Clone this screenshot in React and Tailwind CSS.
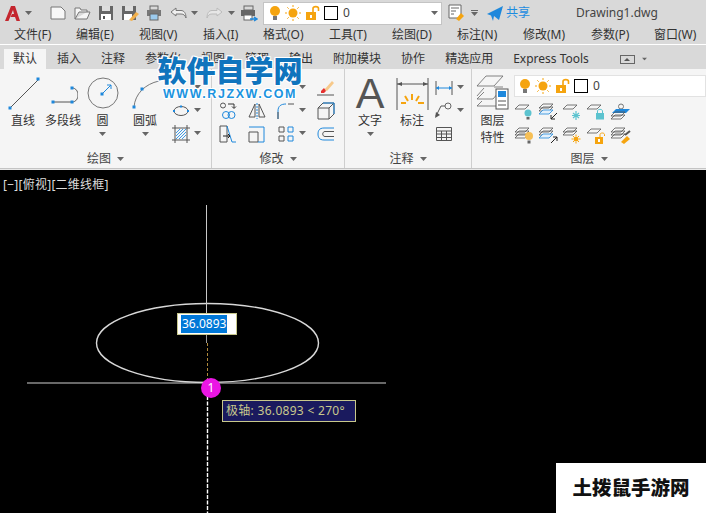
import React from 'react';

const GRAY = '#555555';
const BLUE = '#1e88dc';
const ORANGE = '#f5a40f';
const TEAL = '#5cc3cf';

const Caret = ({ className = '' }) => (
  <svg width="7" height="4" viewBox="0 0 7 4" className={`shrink-0 ${className}`}>
    <path d="M0 0H7L3.5 4Z" fill="#666666" />
  </svg>
);

const Ic = ({ w = 18, h = 18, children }) => (
  <svg width={w} height={h} viewBox={`0 0 ${w} ${h}`} fill="none" className="shrink-0 block">
    {children}
  </svg>
);

const Dot = ({ x, y, s = 3 }) => <rect x={x - s / 2} y={y - s / 2} width={s} height={s} fill={BLUE} />;

const Bulb = ({ color = ORANGE }) => (
  <Ic w={12} h={16}>
    <circle cx="6" cy="6" r="5" fill={color} />
    <rect x="4" y="11" width="4" height="4" fill="#777777" />
  </Ic>
);

const Sun = () => (
  <Ic w={16} h={16}>
    <circle cx="8" cy="8" r="4.5" fill={ORANGE} />
    <path d="M8 0V2M8 14V16M0 8H2M14 8H16M2.3 2.3L3.7 3.7M12.3 12.3L13.7 13.7M2.3 13.7L3.7 12.3M12.3 3.7L13.7 2.3" stroke={ORANGE} />
  </Ic>
);

const OpenLock = () => (
  <Ic w={15} h={16}>
    <rect x="1" y="7" width="10" height="8" fill={ORANGE} />
    <rect x="5" y="10" width="2" height="3" fill="#ffffff" />
    <path d="M8 7V3.5C8 1 13.5 1 13.5 3.5V6" stroke={ORANGE} strokeWidth="1.6" />
  </Ic>
);

const ColorBox = () => <span className="block w-[14px] h-[14px] border border-black bg-white shrink-0" />;

const LayerStates = () => (
  <>
    <Bulb />
    <Sun />
    <OpenLock />
    <ColorBox />
    <span className="ml-[1px] text-[12px] leading-none text-[#444444]">0</span>
  </>
);

// layer sheet: flat parallelogram
const Sheet = ({ y = 0, fill = 'none', stroke = GRAY }) => (
  <path d={`M1 ${y + 5}L5 ${y + 1}H15L11 ${y + 5}Z`} stroke={stroke} fill={fill} strokeWidth="0.8" />
);

const LayerIcon = ({ children }) => <Ic w={22} h={18}>{children}</Ic>;

const layerIcons = [
  <LayerIcon key="a"><Sheet y={1} /><circle cx="14" cy="10" r="3.5" fill={TEAL} /><rect x="12.5" y="14" width="3" height="2.5" fill="#666666" /></LayerIcon>,
  <LayerIcon key="b"><Sheet y={0} /><Sheet y={3} /><Sheet y={6} fill="#e3f0fb" stroke={BLUE} /><path d="M19 10L13 16M13 12V16H17" stroke="#222222" /></LayerIcon>,
  <LayerIcon key="c"><Sheet y={1} /><path d="M14 8V17M10 12.5H18M11 10L17 15M17 10L11 15" stroke={TEAL} strokeWidth="1.2" /></LayerIcon>,
  <LayerIcon key="d"><Sheet y={1} /><rect x="10" y="10" width="8" height="6.5" fill={TEAL} /><path d="M11.5 10V8C11.5 5.8 16.5 5.8 16.5 8V10" stroke={TEAL} /></LayerIcon>,
  <LayerIcon key="e"><circle cx="11" cy="3.5" r="2.5" stroke="#777777" /><path d="M2 10L6 6H20L16 10Z" fill={BLUE} /><Sheet y={8} /><Sheet y={11} /></LayerIcon>,
  <LayerIcon key="f"><Sheet y={0} /><Sheet y={3} /><Sheet y={6} /><circle cx="15" cy="9" r="4" fill="#f6bf55" /><rect x="13.5" y="13.5" width="3" height="3" fill="#666666" /></LayerIcon>,
  <LayerIcon key="g"><Sheet y={0} /><Sheet y={3} /><Sheet y={6} fill="#e3f0fb" stroke={BLUE} /><path d="M13 16L19 10M15 10H19V14" stroke="#222222" /></LayerIcon>,
  <LayerIcon key="h"><Sheet y={0} /><Sheet y={3} /><circle cx="14" cy="12" r="2.5" fill={ORANGE} /><path d="M14 7.5V9M14 15V16.5M9.5 12H11M17 12H18.5M11 9L12 10M16 14L17 15M11 15L12 14M16 10L17 9" stroke={ORANGE} /></LayerIcon>,
  <LayerIcon key="i"><Sheet y={1} /><rect x="9" y="10" width="8" height="7" fill={ORANGE} /><rect x="12" y="12" width="2" height="3" fill="#ffffff" /><path d="M14 10V7.5C14 5.5 18.5 5.5 18.5 7.5V9" stroke={ORANGE} /></LayerIcon>,
  <LayerIcon key="j"><Sheet y={0} /><Sheet y={3} /><Sheet y={6} /><path d="M11 15L17 9L20 12L14 17Z" fill={ORANGE} /><path d="M15 8L20 4" stroke="#555555" strokeWidth="2" /></LayerIcon>,
];

const modifyIcons = {
  move: (
    <Ic w={18} h={18}>
      <circle cx="4" cy="3.5" r="2.5" stroke={GRAY} />
      <path d="M9 2H15V6M13 4.5L15 6.5L17 4.5" stroke="#333333" />
      <circle cx="7" cy="13" r="3.5" stroke={BLUE} />
      <circle cx="12.5" cy="13" r="3.5" stroke={BLUE} />
    </Ic>
  ),
  mirror: (
    <Ic w={18} h={18}>
      <path d="M7 2L1 15H7ZM11 2L17 15H11Z" stroke={GRAY} />
      <path d="M9 1V17" stroke={BLUE} strokeDasharray="2 1" />
    </Ic>
  ),
  fillet: (
    <Ic w={18} h={18}>
      <path d="M1 17V9C1 4 4 2 9 2" stroke={BLUE} />
      <path d="M11 2H17M1 10V17" stroke={GRAY} />
    </Ic>
  ),
  box: (
    <Ic w={18} h={18}>
      <path d="M1 6H12V17H1ZM1 6L6 1H17L12 6M17 1V12L12 17" stroke={GRAY} />
      <path d="M6 1H17V12" stroke={BLUE} />
    </Ic>
  ),
  stretch: (
    <Ic w={18} h={18}>
      <path d="M1 1H8V17H1Z" stroke={GRAY} />
      <path d="M8 1L13 17H17" stroke={BLUE} />
      <path d="M4 11H11M9 9L11 11L9 13" stroke="#222222" />
    </Ic>
  ),
  scale: (
    <Ic w={18} h={18}>
      <path d="M1 7H10V17H1Z" stroke={GRAY} />
      <path d="M1 2H16V17H10" stroke={BLUE} />
    </Ic>
  ),
  array: (
    <Ic w={16} h={16}>
      <path d="M1 1H6V6H1ZM1 10H6V15H1Z" stroke={GRAY} />
      <path d="M10 1H15V6H10ZM10 10H15V15H10Z" stroke={BLUE} />
    </Ic>
  ),
  offset: (
    <Ic w={18} h={14}>
      <path d="M17 1H7C2 1 1 4 1 7C1 10 2 13 7 13H17" stroke={BLUE} />
      <path d="M17 4.5H8C5 4.5 5 9.5 8 9.5H17" stroke={GRAY} />
    </Ic>
  ),
  eraser: (
    <Ic w={18} h={18}>
      <path d="M7 11L15 2L17 4L10 12Z" fill="#f7c98a" />
      <path d="M4 12L7 9L9 12L7 14H4Z" fill="#e53030" />
      <path d="M0 16H17" stroke={GRAY} />
    </Ic>
  ),
};

const SmallTool = ({ children, caret, className = 'justify-center' }) => (
  <div className={`relative flex items-center h-[23px] ${className}`}>
    {children}
    {caret && <Caret className="absolute left-1/2 ml-[13px] top-[9px]" />}
  </div>
);

const LargeTool = ({ label, width, caret, children }) => (
  <div className="flex flex-col items-center" style={{ width }}>
    <div className="h-[36px] flex items-center justify-center">{children}</div>
    <span className="mt-[2px] text-[12px] leading-[16px] text-[#333333]">{label}</span>
    {caret && <Caret className="mt-[3px]" />}
  </div>
);

const PanelTitle = ({ label }) => (
  <div className="h-[20px] pt-[1px] flex items-center justify-center gap-[6px] text-[12px] text-[#444444]">
    {label}
    <Caret />
  </div>
);

const menus = [
  ['文件(F)', 'w-[62px]'],
  ['编辑(E)', 'w-[63px]'],
  ['视图(V)', 'w-[64px]'],
  ['插入(I)', 'w-[60px]'],
  ['格式(O)', 'w-[66px]'],
  ['工具(T)', 'w-[63px]'],
  ['绘图(D)', 'w-[65px]'],
  ['标注(N)', 'w-[66px]'],
  ['修改(M)', 'w-[68px]'],
  ['参数(P)', 'w-[63px]'],
  ['窗口(W)', 'w-[52px]'],
];

const tabs = ['插入', '注释', '参数化', '视图', '管理', '输出', '附加模块', '协作', '精选应用', 'Express Tools'];

const QuickBar = () => (
  <div className="h-[26px] flex items-center">
    <div className="w-[24px] pl-[5px]">
      <svg width="16" height="17" viewBox="0 0 16 17">
        <path d="M0 16L6 1H10L15 16H11.5L10 12H5.5L7 9H9L8 5L3.5 16Z" fill="#c4262e" />
      </svg>
    </div>
    <Caret className="ml-[1px]" />
    <div className="w-[14px]" />
    <div className="w-[24px] flex justify-center">
      <Ic w={16} h={14}><path d="M1 1H11L15 5V13H1Z" fill="#f7f7f7" stroke="#777777" /></Ic>
    </div>
    <div className="w-[24px] flex justify-center">
      <Ic w={17} h={14}><path d="M1 13V2H6L7 4H13V6H5L1 13H13L16 6H13" stroke="#777777" fill="#f5f5f5" /></Ic>
    </div>
    <div className="w-[24px] flex justify-center">
      <Ic w={16} h={16}><path d="M1 1H15V15H1Z" fill="#666666" /><rect x="4" y="1" width="8" height="5" fill="#dddddd" /><rect x="3" y="9" width="10" height="6" fill="#ffffff" /><rect x="5" y="11" width="2" height="3" fill="#555555" /></Ic>
    </div>
    <div className="w-[24px] flex justify-center">
      <Ic w={18} h={16}><path d="M1 1H15V15H1Z" fill="#666666" /><rect x="4" y="1" width="8" height="5" fill="#dddddd" /><rect x="3" y="9" width="8" height="6" fill="#ffffff" /><path d="M8 15L15 7L18 9L11 16Z" fill="#f3b04a" /></Ic>
    </div>
    <div className="w-[24px] flex justify-center">
      <Ic w={16} h={16}><rect x="4" y="1" width="8" height="4" stroke="#666666" /><rect x="1" y="5" width="14" height="6" fill="#777777" /><rect x="4" y="9" width="8" height="6" fill="#9ccbee" stroke="#666666" /></Ic>
    </div>
    <div className="w-[24px] flex justify-center">
      <Ic w={17} h={12}><path d="M6 1L1 5L6 9V7H11C14 7 15 8.5 16 11C16 6 14 3.5 11 3.5H6Z" stroke="#777777" fill="#f0f0f0" /></Ic>
    </div>
    <Caret className="ml-[1px]" />
    <div className="w-[5px]" />
    <div className="w-[22px] flex justify-center">
      <Ic w={17} h={12}><path d="M11 1L16 5L11 9V7H6C3 7 2 8.5 1 11C1 6 3 3.5 6 3.5H11Z" stroke="#bbbbbb" fill="#e6e6e6" /></Ic>
    </div>
    <Caret className="ml-[3px]" />
    <div className="w-[5px]" />
    <div className="w-[18px] flex justify-center">
      <Ic w={18} h={17}><rect x="4" y="1" width="9" height="4" stroke="#666666" /><rect x="1" y="5" width="14" height="6" fill="#666666" /><rect x="4" y="10" width="8" height="5" fill="#ffffff" stroke="#666666" /><path d="M10 14H16M14 12L17 14L14 16" stroke={BLUE} strokeWidth="1.4" /></Ic>
    </div>
    <div className="ml-[5px] w-[179px] h-[23px] bg-white border border-[#c4c4c4] flex items-center gap-[4px] pl-[5px] pr-[2px]">
      <LayerStates />
      <div className="flex-1" />
      <Caret className="mr-[1px]" />
    </div>
    <div className="ml-[6px] w-[16px]">
      <Ic w={16} h={18}><path d="M1 1H13V14H1Z" stroke="#666666" fill="#ffffff" /><path d="M3 4H11M3 7H8M3 10H6" stroke="#666666" /><path d="M8 15L13 9L16 12L11 17Z" fill={ORANGE} /></Ic>
    </div>
    <div className="ml-[7px] flex flex-col items-center gap-[1px]">
      <span className="block w-[7px] h-[1px] bg-[#666666]" />
      <Caret />
    </div>
    <div className="ml-[9px]">
      <Ic w={16} h={15}><path d="M0 8L16 0L12 14L7 10L6 15L4 9.5Z" fill={BLUE} /></Ic>
    </div>
    <span className="ml-[3px] text-[12px] text-[#1c8ce0]">共享</span>
    <span className="ml-[46px] text-[12px] text-[#444444]">Drawing1.dwg</span>
  </div>
);

const MenuBar = () => (
  <div className="h-[19px] flex items-center pl-[14px] border-b border-white">
    {menus.map(([label, w]) => (
      <span key={label} className={`${w} shrink-0 text-[12px] leading-[16px] text-[#333333] whitespace-nowrap`}>{label}</span>
    ))}
  </div>
);

const TabBar = () => (
  <div className="h-[24px] flex items-end pl-[4px] text-[12px] leading-[20px] text-[#333333]">
    <span className="h-[20px] w-[42px] flex items-center justify-center bg-[#f5f5f5]">默认</span>
    <div className="h-[20px] ml-[11px] flex items-center gap-[20px]">
      {tabs.map((t) => (
        <span key={t} className="whitespace-nowrap">{t}</span>
      ))}
    </div>
    <div className="h-[20px] ml-[31px] flex items-center">
      <div className="w-[15px] h-[9px] border border-[#666666] flex items-center justify-center">
        <span className="block w-0 h-0 border-x-[3px] border-x-transparent border-b-[3px] border-b-[#555555]" />
      </div>
      <Caret className="ml-[6px] scale-75" />
    </div>
  </div>
);

const DrawPanel = () => (
  <section className="w-[212px] shrink-0 flex flex-col border-r border-[#cfcfcf]">
    <div className="flex-1 flex pt-[6px] pl-[3px]">
      <LargeTool label="直线" width="40px">
        <Ic w={34} h={36}>
          <path d="M4 33L33 4" stroke="#555555" />
          <Dot x={4} y={33} /><Dot x={32} y={4} />
        </Ic>
      </LargeTool>
      <LargeTool label="多段线" width="40px">
        <Ic w={30} h={30}>
          <path d="M5 24H24C32 24 32 10 24 10" stroke="#555555" />
          <Dot x={5} y={24} /><Dot x={24} y={24} /><Dot x={24} y={10} />
        </Ic>
      </LargeTool>
      <LargeTool label="圆" width="39px" caret>
        <Ic w={32} h={32}>
          <circle cx="16" cy="16" r="15" stroke="#777777" />
          <path d="M15 17L24 8M20 8H24V12" stroke={BLUE} />
          <Dot x={15} y={17} />
        </Ic>
      </LargeTool>
      <LargeTool label="圆弧" width="46px" caret>
        <Ic w={36} h={34}>
          <path d="M7 31C8 18 18 8 32 5" stroke="#777777" />
          <Dot x={7} y={31} /><Dot x={15} y={13} />
        </Ic>
      </LargeTool>
      <div className="w-[26px] flex flex-col pt-[1px]">
        <SmallTool caret><span /></SmallTool>
        <SmallTool caret>
          <Ic w={18} h={12}>
            <ellipse cx="9" cy="6" rx="7" ry="4.5" stroke="#555555" />
            <Dot x={2} y={6} s={2} /><Dot x={16} y={6} s={2} /><Dot x={9} y={1.5} s={2} />
          </Ic>
        </SmallTool>
        <SmallTool caret>
          <Ic w={18} h={18}>
            <path d="M0 3H18M0 15H18M3 0V18M15 0V18" stroke="#555555" />
            <path d="M4 8L8 4M4 11L11 4M4 14L14 4M7 14L14 7M10 14L14 10" stroke="#3f9be6" />
          </Ic>
        </SmallTool>
      </div>
    </div>
    <PanelTitle label="绘图" />
  </section>
);

const ModifyPanel = () => (
  <section className="w-[133px] shrink-0 flex flex-col border-r border-[#cfcfcf]">
    <div className="flex-1 grid grid-cols-[29px_29px_30px_40px] content-start justify-start pt-[7px] pl-[1px]">
      <div />
      <div />
      <SmallTool caret><span /></SmallTool>
      <SmallTool className="justify-end pr-[6px]">{modifyIcons.eraser}</SmallTool>
      <SmallTool>{modifyIcons.move}</SmallTool>
      <SmallTool>{modifyIcons.mirror}</SmallTool>
      <SmallTool caret>{modifyIcons.fillet}</SmallTool>
      <SmallTool className="justify-end pr-[6px]">{modifyIcons.box}</SmallTool>
      <SmallTool>{modifyIcons.stretch}</SmallTool>
      <SmallTool>{modifyIcons.scale}</SmallTool>
      <SmallTool caret>{modifyIcons.array}</SmallTool>
      <SmallTool className="justify-end pr-[6px]">{modifyIcons.offset}</SmallTool>
    </div>
    <PanelTitle label="修改" />
  </section>
);

const AnnotatePanel = () => (
  <section className="w-[127px] shrink-0 flex flex-col border-r border-[#cfcfcf]">
    <div className="flex-1 flex pt-[6px]">
      <LargeTool label="文字" width="50px" caret>
        <span className="block text-[43px] leading-[36px] text-[#555555] font-['Liberation_Sans',sans-serif]">A</span>
      </LargeTool>
      <LargeTool label="标注" width="34px">
        <Ic w={33} h={33}>
          <path d="M1 1V33M32 1V33M1 7H32" stroke="#555555" />
          <path d="M1 7L6 5V9ZM32 7L27 5V9Z" fill="#555555" />
          <path d="M16 17V23M9 19L12 24M23 19L20 24M5 26H10M22 26H28" stroke={ORANGE} strokeWidth="2" />
        </Ic>
      </LargeTool>
      <div className="ml-[5px] w-[20px] flex flex-col pt-[1px]">
        <SmallTool caret>
          <Ic w={18} h={14}>
            <path d="M1 0V14M17 0V14" stroke="#555555" />
            <path d="M1 7H17" stroke={BLUE} />
            <path d="M1 7L4 5V9ZM17 7L14 5V9Z" fill={BLUE} />
          </Ic>
        </SmallTool>
        <SmallTool caret>
          <Ic w={18} h={17}>
            <circle cx="13" cy="4" r="3" stroke="#666666" />
            <path d="M10 4H6L1 14" stroke="#555555" />
            <path d="M0 16L1 10L5 13Z" fill="#555555" />
          </Ic>
        </SmallTool>
        <SmallTool>
          <Ic w={16} h={14}>
            <path d="M0.5 0.5H15.5V13.5H0.5ZM0.5 4H15.5M0.5 7H15.5M0.5 10.5H15.5M5.5 4V13.5M10.5 4V13.5" stroke="#555555" />
          </Ic>
        </SmallTool>
      </div>
    </div>
    <PanelTitle label="注释" />
  </section>
);

const LayerPanel = () => (
  <section className="flex-1 flex flex-col">
    <div className="flex-1 flex pt-[6px] pl-[4px]">
      <div className="w-[33px] flex flex-col items-center">
        <Ic w={33} h={36}>
          <path d="M1 11L10 1H27L18 11ZM1 21L8 13M18 12H27M1 24H17L23 17M1 24L8 17M1 31H20M1 31L6 26" stroke="#666666" strokeWidth="0.8" />
          <rect x="20" y="14" width="12" height="20" fill="#ffffff" stroke="#555555" />
          <rect x="22" y="16" width="8" height="6" fill={BLUE} />
          <path d="M22 26H30M22 30H30" stroke="#555555" />
        </Ic>
        <span className="mt-[1px] text-[12px] leading-[17px] text-[#333333]">图层</span>
        <span className="text-[12px] leading-[17px] text-[#333333]">特性</span>
      </div>
      <div className="ml-[5px] flex-1 flex flex-col">
        <div className="h-[22px] bg-white border border-[#e2e2e2] flex items-center gap-[4px] pl-[4px]">
          <LayerStates />
        </div>
        <div className="mt-[5px] -ml-[1px] grid grid-cols-[24px_24px_24px_24px_24px] gap-y-[5px]">
          {layerIcons.map((icon) => (
            <div key={icon.key} className="h-[19px] flex items-center justify-center">{icon}</div>
          ))}
        </div>
      </div>
    </div>
    <PanelTitle label="图层" />
  </section>
);

const Watermark = () => (
  <div className="absolute left-[157px] top-[54px] w-[146px] flex flex-col items-center font-bold text-[#0f74bd] [text-shadow:1px_1px_0_#fff,-1px_-1px_0_#fff,1px_-1px_0_#fff,-1px_1px_0_#fff,0_1px_0_#fff,0_-1px_0_#fff,1px_0_0_#fff,-1px_0_0_#fff]">
    <span className="text-[29px] leading-[34px] whitespace-nowrap font-black">软件自学网</span>
    <span className="text-[12.5px] leading-[13px] tracking-[1.55px] whitespace-nowrap text-[#1a94e0] font-['Liberation_Sans',sans-serif]">WWW.RJZXW.COM</span>
  </div>
);

const Canvas = () => (
  <div className="relative flex-1 bg-black overflow-hidden">
    <span className="absolute left-[3px] top-[6px] text-[12px] leading-[18px] tracking-[0.25px] text-[#dddddd] whitespace-nowrap">[−][俯视][二维线框]</span>
    <svg width="706" height="343" viewBox="0 170 706 343" className="absolute left-0 top-0">
      <ellipse cx="207.5" cy="343" rx="111" ry="39.5" stroke="#d8d8d8" strokeWidth="1.4" fill="none" />
      <path d="M206.5 205V340" stroke="#c8c8c8" />
      <path d="M27 383H386" stroke="#d0d0d0" />
      <path d="M207.5 343V383" stroke="#b08a3c" strokeDasharray="3 2" />
      <path d="M207.5 396V513" stroke="#ffffff" strokeWidth="1.4" strokeDasharray="4 1.5" />
      <path d="M206.5 335V343" stroke="#9a9a9a" />
    </svg>
    <div className="absolute left-[177px] top-[143px] w-[60px] h-[22px] bg-white border border-[#c8c88c] pl-[3px] flex items-center">
      <span className="bg-[#0078d7] text-white text-[12px] leading-[18px] px-[1px] font-['Noto_Sans',sans-serif]">36.0893</span>
    </div>
    <div className="absolute left-[201px] top-[208px] w-[20px] h-[20px] rounded-full bg-[#ea16e4] flex items-center justify-center text-[12px] leading-none text-white">1</div>
    <div className="absolute left-[222px] top-[230px] w-[134px] h-[22px] bg-[#1a1a5e] border border-[#c8c88c] flex items-center pl-[3px] text-[12px] tracking-[0.3px] text-[#c8c88c] whitespace-nowrap">
      极轴: 36.0893 &lt; 270°
    </div>
    <div className="absolute right-0 bottom-0 w-[150px] h-[50px] bg-white flex items-center justify-center text-[19.5px] font-black text-[#111111] whitespace-nowrap">
      土拨鼠手游网
    </div>
  </div>
);

export default function App() {
  return (
    <div className="relative w-[706px] h-[513px] flex flex-col overflow-hidden bg-[#d9d9d9] font-['Noto_Sans','Noto_Sans_CJK_SC',sans-serif]">
      <QuickBar />
      <MenuBar />
      <TabBar />
      <div className="h-[100px] flex bg-[#f5f5f5] border-b border-[#c4c4c4]">
        <DrawPanel />
        <ModifyPanel />
        <AnnotatePanel />
        <LayerPanel />
      </div>
      <div className="h-[1px] bg-[#e8e8e8]" />
      <Canvas />
      <Watermark />
    </div>
  );
}
